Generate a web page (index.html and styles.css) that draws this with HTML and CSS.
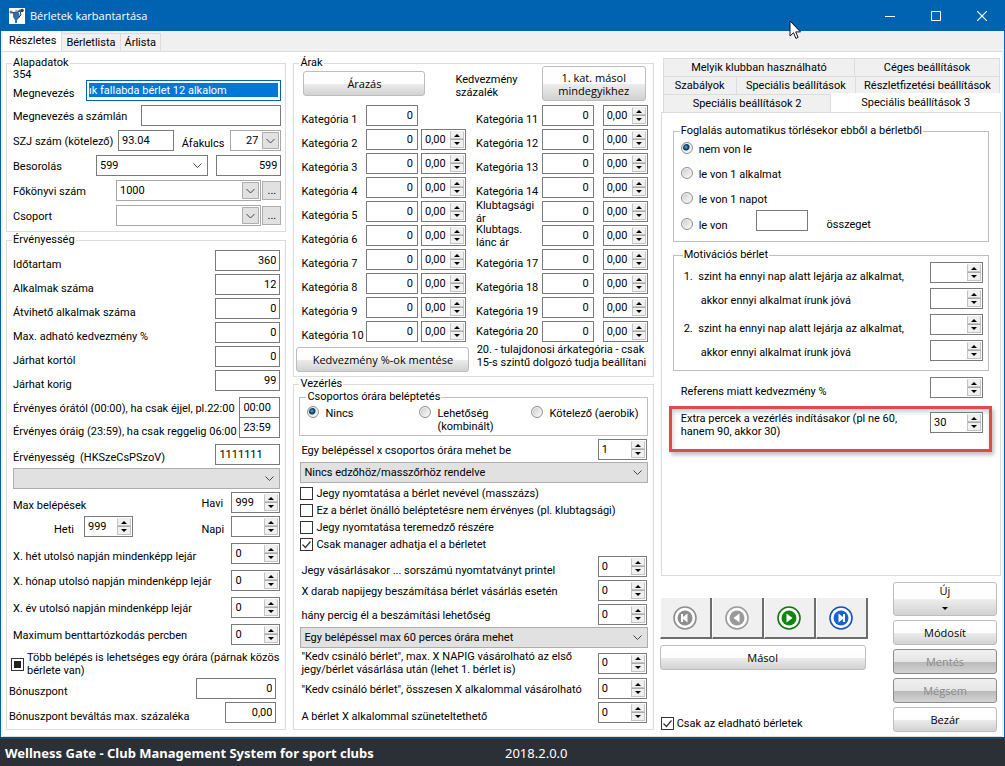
FILE: index.html
```html
<!DOCTYPE html>
<html lang="hu">
<head>
<meta charset="utf-8">
<title>Bérletek karbantartása</title>
<link rel="stylesheet" href="styles.css">
</head>
<body>
<header class="titlebar">
  <svg class="app-icon" width="16" height="16" viewBox="0 0 16 16" aria-hidden="true">
    <rect width="16" height="16" fill="#fff"/>
    <path d="M1 4l4 1 4-1 2-2" fill="none" stroke="#345" stroke-width="1.4"/>
    <circle cx="2" cy="4" r="1.5" fill="#579"/><circle cx="13" cy="2.5" r="1.8" fill="#245"/>
    <path d="M4 5h6l1 4-3 3v3H6v-3L4 9z" fill="#2f6fb5"/>
    <path d="M11 3l1 4-2 2" fill="none" stroke="#134" stroke-width="1"/>
    <circle cx="7.500" cy="3" r="1.300" fill="#8ab"/>
  </svg>
  <h1>Bérletek karbantartása</h1>
  <div class="window-buttons">
    <button aria-label="Kis méret"><svg width="10" height="10"><path d="M0 5.500h10" stroke="#fff"/></svg></button>
    <button aria-label="Teljes méret"><svg width="10" height="10"><path d="M.5.5h9v9h-9z" fill="none" stroke="#fff"/></svg></button>
    <button aria-label="Bezárás"><svg width="10" height="10"><path d="M0 0l10 10M10 0L0 10" stroke="#fff" stroke-width="1.200"/></svg></button>
  </div>
  <svg class="pointer" width="13" height="20" viewBox="0 0 13 20" aria-hidden="true"><path d="M1 1v15l3.500-3.300 2.400 5.700 2.200-1-2.400-5.500h4.800z" fill="#fff" stroke="#112" stroke-width="1"/></svg>
</header>

<div class="window">
  <nav class="tabs" role="tablist">
    <button class="active" role="tab" aria-selected="true">Részletes</button>
    <button role="tab">Bérletlista</button>
    <button role="tab">Árlista</button>
  </nav>
  <main class="page">

    <div class="column">
      <fieldset class="group basics">
        <legend>Alapadatok</legend>
        <div class="record-id">354</div>
        <div class="row"><label class="w-73 low" for="name">Megnevezés</label>
          <div class="box focused grow"><input class="selected" id="name" value="ık fallabda bérlet 12 alkalom"></div></div>
        <div class="row"><label class="grow" for="invname">Megnevezés a számlán</label><input class="box w-140" id="invname"></div>
        <div class="row"><label class="w-105" for="szj">SZJ szám (kötelező)</label><input class="box w-56" id="szj" value="93.04">
          <label class="push low" for="vat">Áfakulcs</label>
          <select class="box w-51 boxed right vat" id="vat"><option>27</option></select></div>
        <div class="row"><label class="w-83" for="class">Besorolás</label><select class="box grow" id="class"><option>599</option></select>
          <input class="box w-65 right gap-left" aria-label="Besorolás kód" value="599"></div>
        <div class="row"><label class="w-103" for="ledger">Főkönyvi szám</label><select class="box grow boxed" id="ledger"><option>1000</option></select><button class="more" aria-label="Főkönyvi szám keresése">...</button></div>
        <div class="row"><label class="w-103" for="grp">Csoport</label><select class="box grow boxed" id="grp"><option></option></select><button class="more" aria-label="Csoport keresése">...</button></div>
      </fieldset>

      <fieldset class="group validity">
        <legend>Érvényesség</legend>
        <div class="row"><label class="grow lower" for="v1">Időtartam</label><input class="box w-65 right" id="v1" value="360"></div>
        <div class="row"><label class="grow lower" for="v2">Alkalmak száma</label><input class="box w-65 right" id="v2" value="12"></div>
        <div class="row"><label class="grow lower" for="v3">Átvihető alkalmak száma</label><input class="box w-65 right" id="v3" value="0"></div>
        <div class="row"><label class="grow lower" for="v4">Max. adható kedvezmény %</label><input class="box w-65 right" id="v4" value="0"></div>
        <div class="row"><label class="grow lower" for="v5">Járhat kortól</label><input class="box w-65 right" id="v5" value="0"></div>
        <div class="row"><label class="grow lower" for="v6">Járhat korig</label><input class="box w-65 right" id="v6" value="99"></div>
        <div class="row space joined"><label class="grow" for="v7">Érvényes órától (00:00), ha csak éjjel, pl.22:00</label><input class="box w-41" id="v7" value="00:00"></div>
        <div class="row"><label class="grow lower" for="v8">Érvényes óráig (23:59), ha csak reggelig 06:00</label><input class="box w-41" id="v8" value="23:59"></div>
        <div class="row space"><label class="grow low" for="v9">Érvényesség &nbsp;(HKSzeCsPSzoV)</label><input class="box w-65" id="v9" value="1111111"></div>
        <select class="box grey" aria-label="Érvényesség típusa"><option></option></select>
        <div class="row"><span class="grow low">Max belépések</span><label class="w-30" for="v10">Havi</label><input class="spin w-49" id="v10" value="999"></div>
        <div class="row"><label class="w-30 indent low" for="v11">Heti</label><input class="spin w-49" id="v11" value="999"><label class="push w-30 low" for="v12">Napi</label><input class="spin w-49" id="v12"></div>
        <div class="row space"><label class="grow low" for="v13">X. hét utolsó napján mindenképp lejár</label><input class="spin w-49" id="v13" value="0"></div>
        <div class="row space"><label class="grow" for="v14">X. hónap utolsó napján mindenképp lejár</label><input class="spin w-49" id="v14" value="0"></div>
        <div class="row space"><label class="grow" for="v15">X. év utolsó napján mindenképp lejár</label><input class="spin w-49" id="v15" value="0"></div>
        <div class="row space"><label class="grow" for="v16">Maximum benttartózkodás percben</label><input class="spin w-49" id="v16" value="0"></div>
        <label class="check multi"><input type="checkbox" class="mixed"><span>Több belépés is lehetséges egy órára (párnak közös bérlete van)</span></label>
        <div class="row outdent"><label class="grow low" for="v17">Bónuszpont</label><input class="box w-80 right" id="v17" value="0"></div>
        <div class="row outdent"><label class="grow lower" for="v18">Bónuszpont beváltás max. százaléka</label><input class="box w-51 right" id="v18" value="0,00"></div>
      </fieldset>
    </div>

    <div class="column">
      <fieldset class="group prices">
        <legend>Árak</legend>
        <div class="price-head">
          <button class="btn w-122">Árazás</button>
          <span class="caption">Kedvezmény százalék</span>
          <button class="btn tall w-104">1. kat. másol mindegyikhez</button>
        </div>
        <div class="categories" id="categories"></div>
        <div class="price-foot">
          <button class="btn">Kedvezmény %-ok mentése</button>
          <span class="note">20. - tulajdonosi árkategória - csak<br>15-s szintű dolgozó tudja beállítani</span>
        </div>
      </fieldset>

      <fieldset class="group control">
        <legend>Vezérlés</legend>
        <fieldset class="group dark modes">
          <legend>Csoportos órára beléptetés</legend>
          <label class="radio"><input type="radio" name="mode" checked><span>Nincs</span></label>
          <label class="radio"><input type="radio" name="mode"><span>Lehetőség (kombinált)</span></label>
          <label class="radio"><input type="radio" name="mode"><span>Kötelező (aerobik)</span></label>
        </fieldset>
        <div class="row"><label class="grow" for="c1">Egy belépéssel x csoportos órára mehet be</label><input class="spin w-49" id="c1" value="1"></div>
        <select class="box grey" aria-label="Edző"><option>Nincs edzőhöz/masszőrhöz rendelve</option></select>
        <div class="checks">
          <label class="check"><input type="checkbox">Jegy nyomtatása a bérlet nevével (masszázs)</label>
          <label class="check"><input type="checkbox">Ez a bérlet önálló beléptetésre nem érvényes (pl. klubtagsági)</label>
          <label class="check"><input type="checkbox">Jegy nyomtatása teremedző részére</label>
          <label class="check"><input type="checkbox" checked>Csak manager adhatja el a bérletet</label>
        </div>
        <div class="row"><label class="grow lower" for="c2">Jegy vásárlásakor ... sorszámú nyomtatványt printel</label><input class="spin w-49" id="c2" value="0"></div>
        <div class="row"><label class="grow" for="c3">X darab napijegy beszámítása bérlet vásárlás esetén</label><input class="spin w-49" id="c3" value="0"></div>
        <div class="row"><label class="grow" for="c4">hány percig él a beszámítási lehetőség</label><input class="spin w-49" id="c4" value="0"></div>
        <select class="box grey duration" aria-label="Óra hossza"><option>Egy belépéssel max 60 perces órára mehet</option></select>
        <div class="row promo"><label class="grow" for="c5">"Kedv csináló bérlet", max. X NAPIG vásárolható az első<br>jegy/bérlet vásárlása után (lehet 1. bérlet is)</label><input class="spin w-49" id="c5" value="0"></div>
        <div class="row"><label class="grow" for="c6">"Kedv csináló bérlet", összesen X alkalommal vásárolható</label><input class="spin w-49" id="c6" value="0"></div>
        <div class="row"><label class="grow lower" for="c7">A bérlet X alkalommal szüneteltethető</label><input class="spin w-49" id="c7" value="0"></div>
      </fieldset>
    </div>

    <div class="column side">
      <nav class="subtabs" role="tablist">
        <div><button role="tab" class="t-192">Melyik klubban használható</button><button role="tab" class="t-145">Céges beállítások</button></div>
        <div><button role="tab" class="t-73">Szabályok</button><button role="tab" class="t-120">Speciális beállítások</button><button role="tab" class="t-145">Részletfizetési beállítások</button></div>
        <div><button role="tab" class="t-168">Speciális beállítások 2</button><button role="tab" class="t-170 active" aria-selected="true">Speciális beállítások 3</button></div>
      </nav>
      <section class="subpage">
        <fieldset class="group dark refund">
          <legend>Foglalás automatikus törlésekor ebből a bérletből</legend>
          <label class="radio"><input type="radio" name="refund" checked><span>nem von le</span></label>
          <label class="radio"><input type="radio" name="refund"><span>le von 1 alkalmat</span></label>
          <label class="radio"><input type="radio" name="refund"><span>le von 1 napot</span></label>
          <div class="amount"><label class="radio"><input type="radio" name="refund"><span>le von</span></label>
            <input class="box w-52" id="sum"><label for="sum">összeget</label></div>
        </fieldset>
        <fieldset class="group dark motivation">
          <legend>Motivációs bérlet</legend>
          <div class="row"><label class="grow lower" for="m1">1. &nbsp;szint ha ennyi nap alatt lejárja az alkalmat,</label><input class="spin w-53" id="m1"></div>
          <div class="row"><label class="grow sub" for="m2">akkor ennyi alkalmat írunk jóvá</label><input class="spin w-53" id="m2"></div>
          <div class="row"><label class="grow lower" for="m3">2. &nbsp;szint ha ennyi nap alatt lejárja az alkalmat,</label><input class="spin w-53" id="m3"></div>
          <div class="row"><label class="grow sub" for="m4">akkor ennyi alkalmat írunk jóvá</label><input class="spin w-53" id="m4"></div>
        </fieldset>
        <div class="row referral"><label class="grow lower" for="m5">Referens miatt kedvezmény %</label><input class="spin w-53" id="m5"></div>
        <div class="row highlight"><label class="grow" for="m6">Extra percek a vezérlés indításakor (pl ne 60,<br>hanem 90, akkor 30)</label><input class="spin w-53" id="m6" value="30"></div>
      </section>
      <div class="actions">
        <div class="record">
          <div class="pager">
            <button disabled aria-label="Első"><svg width="26" height="26" viewBox="0 0 26 26"><circle cx="13" cy="13" r="11" fill="#fff" stroke="#8e8e8e" stroke-width="1.600"/><circle cx="13" cy="13" r="7.500" fill="#8e8e8e"/><path d="M9 9h2v3l4.500-3.500v9L11 14v3H9z" fill="#fff"/></svg></button>
            <button disabled aria-label="Előző"><svg width="26" height="26" viewBox="0 0 26 26"><circle cx="13" cy="13" r="11" fill="#fff" stroke="#9a9a9a" stroke-width="1.600"/><circle cx="13" cy="13" r="7.500" fill="#9a9a9a"/><path d="M15.500 8.500v9L9.500 13z" fill="#fff"/></svg></button>
            <button aria-label="Következő"><svg width="26" height="26" viewBox="0 0 26 26"><circle cx="13" cy="13" r="11" fill="#fff" stroke="#11730f" stroke-width="1.600"/><circle cx="13" cy="13" r="7.500" fill="#11850f"/><path d="M10.500 8.500v9l6-4.500z" fill="#fff"/></svg></button>
            <button aria-label="Utolsó"><svg width="26" height="26" viewBox="0 0 26 26"><circle cx="13" cy="13" r="11" fill="#fff" stroke="#1653b8" stroke-width="1.600"/><circle cx="13" cy="13" r="7.500" fill="#1762d0"/><path d="M17 9h-2v3l-4.500-3.500v9L15 14v3h2z" fill="#fff"/></svg></button>
          </div>
          <button class="btn copy">Másol</button>
          <label class="check sellable"><input type="checkbox" checked>Csak az eladható bérletek</label>
        </div>
        <div class="commands">
          <button class="btn new">Új<i class="caret"></i></button>
          <button class="btn">Módosít</button>
          <button class="btn" disabled>Mentés</button>
          <button class="btn" disabled>Mégsem</button>
          <button class="btn">Bezár</button>
        </div>
      </div>
    </div>
  </main>
</div>

<footer class="status"><strong>Wellness Gate - Club Management System for sport clubs</strong><span>2018.2.0.0</span></footer>
<script src="app.js"></script>
</body>
</html>
```
FILE: styles.css
```css
* { box-sizing: border-box; }
body {
  margin: 0;
  min-height: 100vh;
  display: flex;
  flex-direction: column;
  background: #fff;
  color: #000;
  font: 11px/13px Roboto, "Liberation Sans", Arial, sans-serif;
}
input, select, button { font: inherit; color: inherit; margin: 0; border-radius: 0; }
button { padding: 0; }

/* title bar */
.titlebar {
  position: relative;
  display: flex;
  align-items: center;
  height: 31px;
  padding-left: 9px;
  background: #0063b1;
  color: #fff;
}
.titlebar h1 { margin: 0 0 0 5px; font: 11px/16px "Open Sans", "Noto Sans", sans-serif; }
.window-buttons { margin-left: auto; display: flex; }
.window-buttons button {
  width: 46px; height: 30px; border: 0; background: none;
  display: flex; align-items: center; justify-content: center;
}
.pointer { position: absolute; left: 789px; top: 20px; z-index: 2; }

.window {
  flex: 1;
  display: flex;
  flex-direction: column;
  padding: 0 2px;
  border: solid #0f5f9f;
  border-width: 0 1px;
  background: #f0f0f0;
}
.tabs { display: flex; align-items: flex-end; height: 20px; }
.tabs button { height: 18px; padding: 0 4px; border: 1px solid #dcdcdc; border-width: 1px 1px 0 0; background: #f0f0f0; }
.tabs .active { height: 20px; padding: 0 5px 2px 6px; background: #fff; border-top: 0; }

.page {
  flex: 1;
  display: grid;
  grid-template-columns: 281fr 361fr 342fr;
  gap: 7px;
  padding: 4px 0 6px 3px;
  background: #fff;
  border-top: 1px solid #dcdcdc;
  border-bottom: 1px solid #dcdcdc;
}
.column { min-width: 0; display: flex; flex-direction: column; }

/* group boxes */
.group { min-width: 0; margin: 0; padding: 0 5px 5px 6px; border: 1px solid #dcdcdc; }
.group legend { height: 14px; line-height: 14px; padding: 0 1px; margin-left: -1px; }
.group.dark { border-color: #bfbfbf; }
.basics, .validity, .control { display: flex; flex-direction: column; gap: 4px; }
.basics { padding-right: 4px; }
.validity { gap: 3px; margin-top: 1px; padding-top: 3px; padding-bottom: 2px; flex: 1; }
.record-id { line-height: 10px; margin-bottom: -4px; }

.row { display: flex; align-items: center; min-height: 21px; }
.row label { padding-top: 2px; }
.row .low, .row label.low { padding-top: 6px; }
.row label.lower { padding-top: 8px; }
.grow { flex: 1; min-width: 0; white-space: nowrap; }
.push { margin-left: auto; }
.space { margin-top: 3px; }
.joined { margin-bottom: -4px; }
.indent { margin-left: 41px; }
.outdent { margin-left: -4px; margin-right: 4px; }
.gap-left { margin-left: 8px; }

.w-30 { width: 30px; }
.w-41 { width: 41px; }
.w-49 { width: 49px; }
.w-51 { width: 51px; }
.w-52 { width: 52px; }
.w-53 { width: 53px; }
.w-56 { width: 56px; }
.w-65 { width: 65px; }
.w-73 { width: 73px; }
.w-80 { width: 80px; }
.w-83 { width: 83px; }
.w-103 { width: 103px; }
.w-104 { width: 104px; }
.w-105 { width: 105px; }
.w-122 { width: 122px; }
.w-140 { width: 140px; }

/* fields */
.box {
  display: block;
  height: 21px;
  padding: 0 3px 1px;
  border: 1px solid #7a7a7a;
  background: #fff;
  outline: 0;
}
.right { text-align: right; }
.vat { margin-left: 6px; }
.focused { padding: 2px; border-color: #0063b1; }
.selected { display: block; width: 100%; height: 14px; padding: 0; border: 0; background: #0078d7; color: #fff; outline: 0; }
select.box {
  appearance: none;
  padding: 0 22px 0 3px;
  background: #fff url("data:image/svg+xml,%3Csvg xmlns='http://www.w3.org/2000/svg' width='9' height='5'%3E%3Cpath d='M.5.5l4 4 4-4' fill='none' stroke='%23444'/%3E%3C/svg%3E") no-repeat right 5px center;
}
select.boxed {
  border-color: #a8a8a8;
  background-image: url("data:image/svg+xml,%3Csvg xmlns='http://www.w3.org/2000/svg' width='17' height='17'%3E%3Cpath d='M.5.5h16v16H.5z' fill='%23e1e1e1' stroke='%23adadad'/%3E%3Cpath d='M4.500 7l4 4 4-4' fill='none' stroke='%23444'/%3E%3C/svg%3E");
  background-position: right 1px center;
}
select.grey { width: 100%; border-color: #adadad; background-color: #e1e1e1; }
.more { width: 19px; height: 19px; margin-left: 1px; border: 1px solid #adadad; background: #e1e1e1; }

.stepper { display: block; position: relative; height: 21px; border: 1px solid #7a7a7a; background: #fff; flex: none; }
.stepper input { display: block; width: 100%; height: 19px; padding: 0 17px 1px 3px; border: 0; background: none; outline: 0; }
.stepper .steps { position: absolute; top: 1px; right: 1px; width: 14px; display: grid; gap: 0; }
.steps button { height: 8px; border: 1px solid #c4c4c4; border-top-color: #eee; background: #f0f0f0; display: flex; align-items: center; justify-content: center; }
.steps button + button { height: 9px; border-top-color: #aaa; }
.steps button::after { content: ""; border: solid transparent; border-width: 0 3px 3px; border-bottom-color: #000; }
.steps button + button::after { border-width: 3px 3px 0; border-top-color: #000; }

.check { display: flex; align-items: center; gap: 3px; }
.check input { appearance: none; flex: none; width: 13px; height: 13px; border: 1px solid #333; background: #fff center no-repeat; }
.check input:checked { background-image: url("data:image/svg+xml,%3Csvg xmlns='http://www.w3.org/2000/svg' width='11' height='11'%3E%3Cpath d='M1.500 5.500l3 3 5-6' fill='none' stroke='%23333' stroke-width='1.200'/%3E%3C/svg%3E"); }
.check .mixed { background: linear-gradient(#222, #222) center / 7px 7px no-repeat; }
.check.multi { margin: 3px 0 -2px -2px; }

.radio { display: flex; align-items: flex-start; gap: 6px; }
.radio input {
  appearance: none; flex: none; width: 12px; height: 12px; border: 1px solid #8e8f8f; border-radius: 50%;
  background: linear-gradient(135deg, #c8c8c8, #fff);
  box-shadow: inset 0 0 0 1px #f4f4f4;
}
.radio input:checked { background: radial-gradient(circle at 40% 40%, #6fb8dc 0, #174a73 2px, #123a5c 3px, #e6eef2 4px); }
.radio span { padding-top: 1px; }

/* push buttons */
.btn {
  min-height: 25px;
  border: 1px solid #bdbdbd;
  border-radius: 3px;
  background: linear-gradient(#fff 0, #fdfdfd 50%, #ececec 52%, #d2d2d2 100%);
  font: 11px/13px "Open Sans", "Noto Sans", sans-serif;
}
.btn:disabled { border-color: #8c8c8c; color: #8a8a8a; background: linear-gradient(#f0f0f0 0, #e6e6e6 50%, #b9b9b9 52%, #d4d4d4 100%); }
.btn.tall { min-height: 35px; }

/* prices */
.prices { padding-bottom: 4px; }
.price-head { display: flex; align-items: center; margin: -4px 2px 4px 3px; }
.price-head .caption { width: 64px; margin: 4px auto 0 30px; }
.categories {
  display: grid;
  grid-template-columns: minmax(0, 61fr) 52px 45px minmax(0, 69fr) 52px 51px;
  gap: 3px;
  padding-left: 1px;
}
.categories label { align-self: center; padding-top: 8px; white-space: nowrap; }
.categories label.second { padding-left: 7px; }
.categories label.wrap { padding-top: 0; margin: -4px 0; white-space: normal; }
.categories label.level { padding-top: 0; }
.categories .box { width: 52px; padding-right: 4px; }
.categories .stepper { width: 45px; }
.categories .stepper.second { justify-self: end; }
.categories .spin { padding-right: 15px; }
.price-foot { display: flex; justify-content: space-between; margin: 1px 2px 0 -4px; }
.price-foot .btn { width: 173px; height: 25px; margin-top: 4px; }
.price-foot .note { white-space: nowrap; width: 169px; }

/* control */
.control { gap: 0; flex: 1; padding-bottom: 3px; }
.modes { display: grid; grid-template-columns: repeat(3, 112px); margin: -1px 0 3px -1px; padding: 2px 0 2px 7px; }
.control select { margin-top: 2px; }
.checks { display: grid; gap: 4px; margin: 4px 0 5px; }
.control .row { padding: 0 1px; margin-bottom: 3px; }
.control .row:has(+ select) { margin-bottom: 0; }
.control .duration { margin: 2px 0 0; }
.control .promo { margin-top: 2px; min-height: 24px; margin-bottom: 2px; }
.promo label { padding: 0; }

/* right column */
.subtabs { display: flex; flex-direction: column; margin: 2px 2px 0; }
.subtabs div { display: flex; height: 18px; }
.subtabs button { border: 1px solid #dcdcdc; border-width: 1px 1px 0; background: #f0f0f0; white-space: nowrap; }
.subtabs button + button { border-left: 0; }
.subtabs .active { height: 20px; margin-top: -1px; padding-bottom: 2px; background: #fff; border: 0; }
.t-192 { flex: 192 1 0; }
.t-145 { flex: 145 1 0; }
.t-73 { flex: 73 1 0; }
.t-120 { flex: 120 1 0; }
.t-168 { flex: 168 1 0; }
.t-170 { flex: 170 1 0; }
.subpage { flex: 1; border: 1px solid #dcdcdc; margin-right: 1px; padding: 11px 11px 0; }
.refund { padding: 4px 5px 0 7px; height: 118px; }
.refund > .radio, .amount { height: 25px; }
.amount { display: flex; }
.amount .box { margin: -7px 19px 0 28px; }
.amount > label { padding-top: 1px; }
.motivation { display: grid; gap: 5px; margin-top: 6px; padding: 0 5px 9px 10px; }
.motivation .sub { padding: 3px 0 0 17px; }
.referral { margin: 6px 6px 0 8px; }
.highlight {
  align-items: flex-start;
  height: 46px;
  margin: 8px -3px 0 -4px;
  padding: 3px 6px 0 9px;
  border: 3px solid #e04a4d;
  box-shadow: 2px 3px 4px #8888, inset 1px 3px 4px #8886;
}
.highlight label { padding-top: 0; }
.actions { display: flex; justify-content: space-between; padding: 6px 5px 0 0; margin-bottom: -2px; }
.record { display: flex; flex-direction: column; width: 208px; margin-left: -1px; padding-top: 16px; }
.pager { display: grid; grid-template-columns: repeat(4, 1fr); }
.pager button { height: 41px; border: solid #6d6d6d; border-width: 0 2px 2px 0; border-left: 1px solid #fff; background: #f0f0f0; display: flex; align-items: center; justify-content: center; }
.copy { margin: 6px 2px 0 0; }
.sellable { margin-top: 47px; margin-left: 1px; }
.commands { display: flex; flex-direction: column; gap: 4px; width: 104px; }
.new { height: 34px; display: flex; flex-direction: column; align-items: center; justify-content: space-between; padding: 1px 0 5px; }
.caret { border: solid transparent; border-width: 3px 3px 0; border-top-color: #000; }

.status {
  display: flex;
  align-items: center;
  height: 29px;
  padding-left: 5px;
  border-top: 2px solid #1b4664;
  background: #2b3036;
  color: #fff;
  font: 13px/18px "Noto Sans", "Open Sans", sans-serif;
}
.status strong { width: 500px; white-space: nowrap; }
```
FILE: app.js
```js
const names = { 15: "Klubtagsági ár", 16: "Klubtags. lánc ár" };
const grid = document.getElementById("categories");

function cell(n) {
  const label = document.createElement("label");
  label.htmlFor = "k" + n;
  label.textContent = names[n] || "Kategória " + n;
  if (n > 10) label.classList.add("second");
  if (names[n]) label.classList.add("wrap");
  if (n === 20) label.classList.add("level");
  const price = document.createElement("input");
  price.id = "k" + n;
  price.className = "box right";
  price.value = "0";
  grid.append(label, price);
  if (n === 1) {
    grid.append(document.createElement("span"));
    return;
  }
  const discount = document.createElement("input");
  discount.className = n > 10 ? "spin second" : "spin";
  discount.value = "0,00";
  discount.setAttribute("aria-label", "Kedvezmény " + n);
  grid.append(discount);
}
for (let i = 1; i <= 10; i++) {
  cell(i);
  cell(i + 10);
}

// wrap every numeric field with its up/down buttons
document.querySelectorAll("input.spin").forEach((input) => {
  const wrap = document.createElement("span");
  wrap.className = "stepper";
  input.classList.forEach((c) => c !== "spin" && wrap.classList.add(c));
  input.className = "spin";
  input.replaceWith(wrap);
  const steps = document.createElement("span");
  steps.className = "steps";
  [1, -1].forEach((d) => {
    const b = document.createElement("button");
    b.type = "button";
    b.setAttribute("aria-label", d > 0 ? "Növel" : "Csökkent");
    b.addEventListener("click", () => {
      const comma = input.value.includes(",");
      const v = (parseFloat(input.value.replace(",", ".")) || 0) + d;
      input.value = comma ? v.toFixed(2).replace(".", ",") : String(v);
    });
    steps.append(b);
  });
  wrap.append(input, steps);
});
```
